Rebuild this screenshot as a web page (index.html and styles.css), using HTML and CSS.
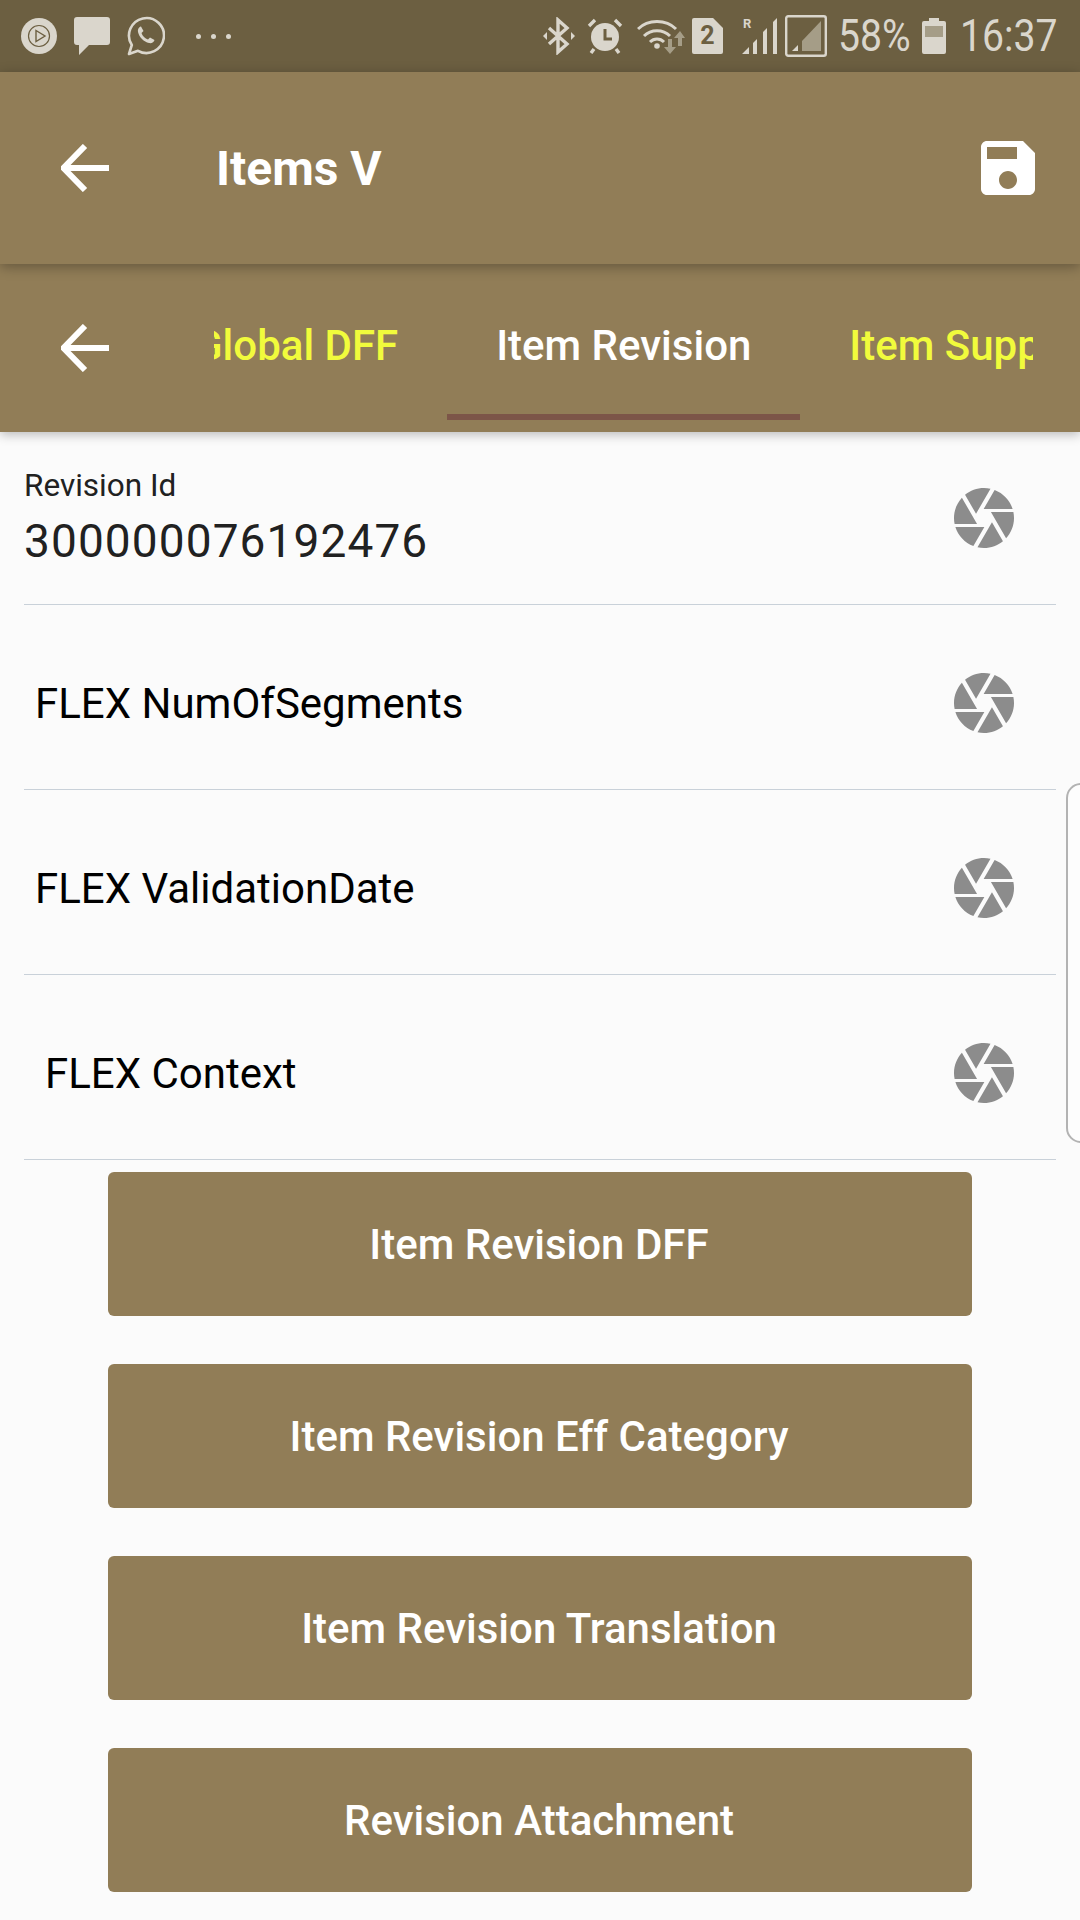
FILE: index.html
```html
<!DOCTYPE html>
<html lang="en">
<head>
    <meta charset="UTF-8">
    <meta name="viewport" content="width=device-width, initial-scale=1.0">
    <title>Items V</title>
    <link rel="stylesheet" href="styles.css">
</head>
<body>

<div class="status-bar">
    <div class="status-left">
        <svg class="ic-play" viewBox="0 0 36 36"><circle cx="18" cy="18" r="18" fill="#dad6cc"/><circle cx="18" cy="18" r="10.5" fill="none" stroke="#6c5f41" stroke-width="1.2"/><path d="M15 12.5 24 18 15 23.5z" fill="none" stroke="#6c5f41" stroke-width="1.4"/></svg>
        <svg class="ic-chat" viewBox="0 0 36 38"><path d="M3 0H33a3 3 0 0 1 3 3V25a3 3 0 0 1-3 3H15L5 38V28H3a3 3 0 0 1-3-3V3a3 3 0 0 1 3-3z" fill="#dad6cc"/></svg>
        <svg class="ic-whatsapp" viewBox="0 0 38 40"><path d="M2 38 4.8 29A17.5 17.5 0 1 1 11 34.800z" fill="none" stroke="#dad6cc" stroke-width="2.600" stroke-linejoin="round"/><path d="M13.500 10.500c-2 1-3 3-2.500 5.500 1 5 6 10 11 11 2.500.5 5-.5 5.500-3l-4.500-2.500-2 2c-3-1-5.500-3.500-6.500-6.500l2-2-2.500-4.500z" fill="#dad6cc"/></svg>
        <div class="dots"><span></span><span></span><span></span></div>
    </div>
    <div class="status-right">
        <svg class="ic-bt" viewBox="0 0 32 38"><path d="M6 11 24 27 15 35V3L24 11 6 27" fill="none" stroke="#dad6cc" stroke-width="3.400"/><path d="M0 19 4 15V23zM32 19 28 15V23z" fill="#dad6cc"/></svg>
        <svg class="ic-alarm" viewBox="0 0 36 36"><circle cx="18" cy="19" r="14" fill="#dad6cc"/><path d="M2 8 8 2M34 8 28 2M7 31 4 35M29 31 32 35" stroke="#dad6cc" stroke-width="3.400" fill="none"/><path d="M18 11V21H25" stroke="#6c5f41" stroke-width="3" fill="none"/></svg>
        <svg class="ic-wifi" viewBox="0 0 48 36"><path d="M1 11C11 1 29 1 39 11M7 18C14 11 26 11 33 18M13 24C17 20 23 20 27 24" fill="none" stroke="#dad6cc" stroke-width="3"/><circle cx="20" cy="28" r="2.800" fill="#dad6cc"/><path d="M33 36 27 29H31V21H35V29H39zM43 13 37 20H41V28H45V20H48z" fill="#a59d87"/></svg>
        <div class="sim"><span>2</span></div>
        <div class="signal">
            <span class="signal-r">R</span>
            <svg viewBox="0 0 36 36"><path d="M0 36 7 29V36zM11 36V25L15 21V36zM21 36V14L25 10V36zM31 36V4L35 0V36z" fill="#dad6cc"/></svg>
        </div>
        <svg class="ic-box" viewBox="0 0 42 42"><rect x="1.200" y="1.200" width="39.600" height="39.600" rx="2" fill="none" stroke="#dad6cc" stroke-width="2.400"/><path d="M7 36 13 30V36z" fill="#dad6cc"/><path d="M17 36V26L36 6V36z" fill="#a59d87"/></svg>
        <span class="status-pct">58%</span>
        <svg class="ic-batt" viewBox="0 0 24 36"><path d="M7 0H17V3H22A2 2 0 0 1 24 5V34A2 2 0 0 1 22 36H2A2 2 0 0 1 0 34V5A2 2 0 0 1 2 3H7z" fill="#dad6cc"/><rect x="3" y="8" width="18" height="11" fill="#a59d87"/></svg>
        <span class="status-time">16:37</span>
    </div>
</div>

<div class="app-header">
    <svg class="ic-back" viewBox="0 0 48 48"><path d="M48 24H3M24 2 2.500 24 24 46" fill="none" stroke="#fff" stroke-width="6"/></svg>
    <div class="app-title">Items V</div>
    <svg class="ic-save" viewBox="0 0 24 24"><path fill="#fff" d="M17 3H5c-1.110 0-2 .9-2 2v14c0 1.100.89 2 2 2h14c1.100 0 2-.9 2-2V7l-4-4zm-5 16c-1.660 0-3-1.340-3-3s1.340-3 3-3 3 1.340 3 3-1.340 3-3 3zm3-10H5V5h10v4z"/></svg>
</div>

<div class="tab-bar">
    <svg class="ic-back" viewBox="0 0 48 48"><path d="M48 24H3M24 2 2.500 24 24 46" fill="none" stroke="#fff" stroke-width="6"/></svg>
    <div class="tabs">
        <div class="tab tab-scrolled">Global DFF</div>
        <div class="tab tab-active">Item Revision</div>
        <div class="tab">Item Suppliers</div>
    </div>
</div>

<div class="form-list">
    <div class="row row-first">
        <div class="row-text">
            <div class="row-label">Revision Id</div>
            <div class="row-value">300000076192476</div>
        </div>
        <svg class="ic-camera" viewBox="0 0 24 24"><use href="#aperture"/></svg>
    </div>
    <div class="row">
        <div class="row-name">FLEX NumOfSegments</div>
        <svg class="ic-camera" viewBox="0 0 24 24"><use href="#aperture"/></svg>
    </div>
    <div class="row">
        <div class="row-name">FLEX ValidationDate</div>
        <svg class="ic-camera" viewBox="0 0 24 24"><use href="#aperture"/></svg>
    </div>
    <div class="row">
        <div class="row-name row-name-wide">FLEX Context</div>
        <svg class="ic-camera" viewBox="0 0 24 24"><use href="#aperture"/></svg>
    </div>
</div>

<div class="actions">
    <div class="action-btn">Item Revision DFF</div>
    <div class="action-btn">Item Revision Eff Category</div>
    <div class="action-btn">Item Revision Translation</div>
    <div class="action-btn">Revision Attachment</div>
</div>

<div class="edge-handle"></div>

<svg class="defs" width="0" height="0">
    <defs>
        <path id="aperture" d="M9.400 10.500l4.770-8.260C13.470 2.090 12.750 2 12 2c-2.400 0-4.600.85-6.320 2.250l3.660 6.350.06-.1zM21.540 9c-.92-2.920-3.150-5.260-6-6.340L11.880 9h9.660zm.26 1h-7.490l.29.5 4.760 8.250C21 16.970 22 14.610 22 12c0-.69-.07-1.350-.2-2zM8.540 12l-3.900-6.750C3.010 7.030 2 9.390 2 12c0 .69.07 1.350.2 2h7.490l-1.150-2zm-6.080 3c.92 2.920 3.150 5.260 6 6.340L12.120 15H2.460zm11.270 0l-3.900 6.760c.7.150 1.420.24 2.170.24 2.400 0 4.600-.85 6.320-2.250l-3.660-6.350-.93 1.600z"/>
    </defs>
</svg>

</body>
</html>
```

FILE: styles.css
```css
html, body { margin: 0; padding: 0; }
body { width: 1080px; height: 1920px; overflow: hidden; position: relative; background: #fbfbfb; font-family: Roboto, "Noto Sans", sans-serif; }

.status-bar { height: 72px; background: #6c5f41; display: flex; justify-content: space-between; align-items: center; color: #dad6cc; }
.status-left { display: flex; align-items: center; margin-left: 21px; }
.status-right { display: flex; align-items: center; margin-right: 24px; }
.ic-play { width: 36px; height: 36px; margin-right: 17px; }
.ic-chat { width: 36px; height: 38px; margin-right: 17px; }
.ic-whatsapp { width: 38px; height: 40px; margin-right: 31px; }
.dots { display: flex; gap: 10px; }
.dots span { width: 5px; height: 5px; border-radius: 50%; background: #dad6cc; }

.ic-bt { width: 32px; height: 38px; margin-right: 12px; }
.ic-alarm { width: 36px; height: 36px; margin-right: 14px; }
.ic-wifi { width: 48px; height: 36px; margin-right: 7px; }
.sim { width: 31px; height: 36px; background: #dad6cc; color: #6c5f41; border-radius: 2px; clip-path: polygon(0 0, 68% 0, 100% 28%, 100% 100%, 0 100%); font-size: 25px; font-weight: 700; line-height: 36px; text-align: center; margin-right: 19px; }
.signal { position: relative; width: 36px; height: 36px; margin-right: 7px; }
.signal svg { width: 36px; height: 36px; display: block; }
.signal-r { position: absolute; left: 1px; top: -2px; font-size: 13px; font-weight: 700; }
.ic-box { width: 42px; height: 42px; margin-right: 11px; }
.status-pct, .status-time { font-size: 45px; font-weight: 400; line-height: 72px; display: inline-block; transform: scaleX(0.87); }
.status-pct { width: 71px; transform-origin: left center; margin-right: 13px; white-space: nowrap; }
.status-time { width: 96px; transform-origin: left center; margin-left: 14px; white-space: nowrap; }
.ic-batt { width: 24px; height: 36px; }

.app-header { height: 192px; background: #917d57; display: flex; align-items: center; box-shadow: 0 3px 12px rgba(0, 0, 0, 0.3); position: relative; z-index: 2; }
.ic-back { width: 48px; height: 48px; margin-left: 61px; flex: none; }
.app-title { margin-left: 107px; font-size: 48px; font-weight: 700; color: #fff; flex: 1; }
.ic-save { width: 72px; height: 72px; margin-right: 36px; }

.tab-bar { height: 168px; background: #917d57; display: flex; align-items: center; box-shadow: 0 3px 10px rgba(0, 0, 0, 0.25); position: relative; z-index: 1; }
.tabs { display: flex; margin-left: 105px; width: 819px; height: 168px; overflow: hidden; flex: none; }
.tab { flex: none; box-sizing: border-box; height: 156px; padding: 7px 49px 0; font-size: 42px; font-weight: 500; line-height: 149px; color: #f1fb3c; white-space: nowrap; }
.tab-scrolled { margin-left: -69px; }
.tab-active { color: #fff; border-bottom: 6px solid #7c5548; }

.form-list { margin: 0 24px; }
.row { box-sizing: border-box; height: 185px; padding-top: 12px; border-bottom: 1px solid #c9d1d9; display: flex; justify-content: space-between; align-items: center; }
.row-first { height: 173px; padding-top: 0; }
.row-label { font-size: 31.5px; color: #212121; line-height: 36px; margin-bottom: 9px; }
.row-value { font-size: 46px; color: #212121; line-height: 56px; letter-spacing: 1.1px; }
.row-name { font-size: 42px; color: #000; margin-left: 11px; }
.row-name-wide { margin-left: 21px; }
.ic-camera { width: 72px; height: 72px; margin-right: 36px; fill: #8c8c8c; }

.actions { margin: 12px 0 0 108px; width: 864px; display: flex; flex-direction: column; gap: 48px; }
.action-btn { box-sizing: border-box; height: 144px; padding-right: 2px; background: #917d57; border-radius: 6px; color: #fff; font-size: 42px; font-weight: 500; display: flex; align-items: center; justify-content: center; }

.edge-handle { position: absolute; left: 1066px; top: 783px; width: 30px; height: 360px; box-sizing: border-box; border: 2px solid #b3b3b3; border-radius: 18px; background: #fdfdfd; }
.defs { position: absolute; }
```
